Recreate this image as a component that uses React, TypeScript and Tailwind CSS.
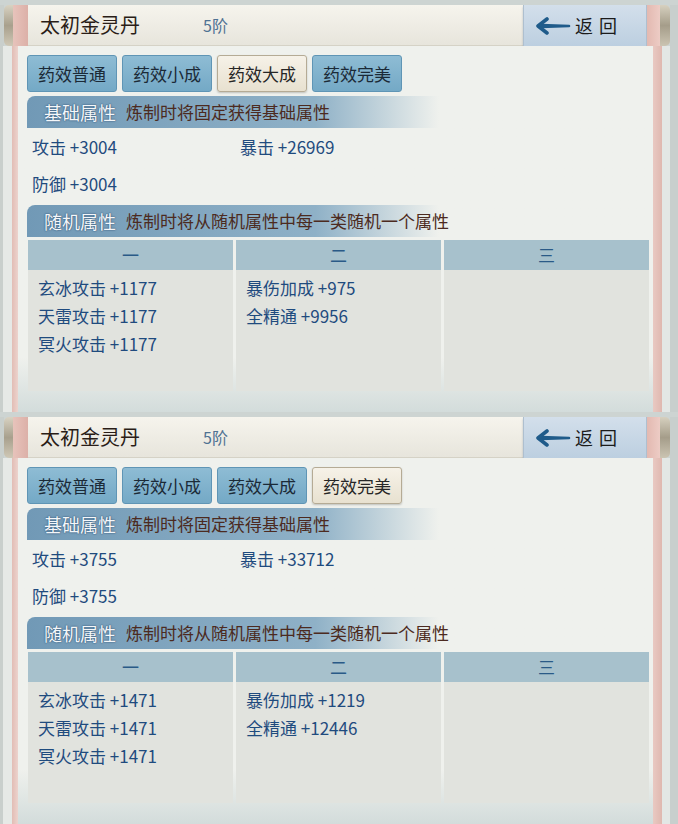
import React from 'react';

type PanelData = {
  active: number;
  atk: string;
  crit: string;
  def: string;
  col1: string[];
  col2: string[];
};

const tabs = ['药效普通', '药效小成', '药效大成', '药效完美'];

const panels: PanelData[] = [
  {
    active: 2,
    atk: '+3004',
    crit: '+26969',
    def: '+3004',
    col1: ['玄冰攻击 +1177', '天雷攻击 +1177', '冥火攻击 +1177'],
    col2: ['暴伤加成 +975', '全精通 +9956'],
  },
  {
    active: 3,
    atk: '+3755',
    crit: '+33712',
    def: '+3755',
    col1: ['玄冰攻击 +1471', '天雷攻击 +1471', '冥火攻击 +1471'],
    col2: ['暴伤加成 +1219', '全精通 +12446'],
  },
];

function SectionHeader({ label, desc }: { label: string; desc: string }) {
  return (
    <div className="h-[32px] w-[412px] flex items-center whitespace-nowrap rounded-tl-[8px] bg-gradient-to-r from-[#7199b6] via-[#8fb1c7] via-70% to-transparent">
      <span className="shrink-0 pl-[17px] text-[18px] text-[#f4f7fa] [text-shadow:0_0_2px_#35587a,0_0_1px_#35587a]">
        {label}
      </span>
      <span className="shrink-0 pl-[10px] text-[17px] text-[#4c2a20]">{desc}</span>
    </div>
  );
}

function Panel({ data }: { data: PanelData }) {
  return (
    <div className="h-[412px] flex flex-col bg-[#cdd4d2]">
      <div className="h-[5px]" />
      {/* Title bar */}
      <div className="h-[41px] flex">
        <div className="w-[4px] bg-[#c9cfcc]" />
        <div className="w-[9px] rounded-l-[5px] bg-gradient-to-b from-[#d8d2c2] via-[#a8a08d] to-[#cfc8b6]" />
        <div className="w-[15px] bg-gradient-to-r from-[#e7c3bb] to-[#dcb0a8]" />
        <div className="flex-1 flex items-center pl-[12px] bg-gradient-to-b from-[#f6f4ed] to-[#e7e5dc] border-b border-[#d5d2c6]">
          <span className="text-[20px] text-[#2a1d17] w-[163px]">太初金灵丹</span>
          <span className="text-[16px] text-[#4f7293]">5阶</span>
        </div>
        <div className="w-[124px] flex items-center pl-[11px] bg-gradient-to-b from-[#d3dfeb] to-[#bccfe0] border-x border-[#aebfcf] shadow-[0_2px_2px_rgba(90,110,130,0.35)]">
          <svg width="36" height="18" viewBox="0 0 36 18">
            <path d="M34 9 L6 8 L6 10 Z" stroke="#1f5b8a" strokeWidth="2.6" strokeLinejoin="round" fill="#1f5b8a" />
            <path d="M12 2 L3 9 L12 16" stroke="#1f5b8a" strokeWidth="3.6" fill="none" strokeLinecap="round" strokeLinejoin="round" />
          </svg>
          <span className="pl-[4px] text-[18px] tracking-[6px] text-[#1b1b1b]">返回</span>
        </div>
        <div className="w-[13px] bg-gradient-to-r from-[#e3b9b1] to-[#edccc5]" />
        <div className="w-[10px] rounded-r-[5px] bg-gradient-to-b from-[#d6d0bf] via-[#a59d8a] to-[#cbc4b2]" />
        <div className="w-[8px] bg-[#c8cfcd]" />
      </div>
      {/* Body */}
      <div className="flex-1 flex">
        <div className="w-[3px] bg-[#c9cfcc]" />
        <div className="w-[9px] bg-[#e6e9e6]" />
        <div className="w-[6px] bg-gradient-to-r from-[#e2bdb5] to-[#ecd3cd]" />
        <div className="flex-1 flex flex-col pl-[9px] pr-[4px] bg-gradient-to-b from-[#eff1ed] from-85% to-[#d3dcdb]">
          <div className="mt-[9px] flex gap-[5px]">
            {tabs.map((t, i) => (
              <div
                key={t}
                className={
                  i === data.active
                    ? 'w-[90px] h-[37px] flex items-center justify-center rounded-[3px] border border-[#b5ab95] bg-gradient-to-b from-[#f6f2e8] to-[#e8e1d0] text-[17px] text-[#262626] shadow-[0_1px_2px_rgba(0,0,0,0.2)]'
                    : 'w-[90px] h-[37px] flex items-center justify-center rounded-[3px] border border-[#5f95b5] bg-gradient-to-b from-[#8ebcd4] to-[#74a9c6] text-[17px] text-[#1b2a37]'
                }
              >
                {t}
              </div>
            ))}
          </div>
          <div className="mt-[4px]">
            <SectionHeader label="基础属性" desc="炼制时将固定获得基础属性" />
          </div>
          <div className="h-[37px] flex items-center text-[17px] text-[#1f4b7e] pl-[5px]">
            <span className="w-[208px]">攻击 {data.atk}</span>
            <span>暴击 {data.crit}</span>
          </div>
          <div className="h-[37px] flex items-center text-[17px] text-[#1f4b7e] pl-[5px]">
            <span>防御 {data.def}</span>
          </div>
          <div className="mt-[3px]">
            <SectionHeader label="随机属性" desc="炼制时将从随机属性中每一类随机一个属性" />
          </div>
          <div className="mt-[3px] ml-[1px] grid grid-cols-3 gap-x-[3px] h-[151px]">
            {['一', '二', '三'].map((h, ci) => {
              const items = ci === 0 ? data.col1 : ci === 1 ? data.col2 : [];
              return (
                <div key={h} className="flex flex-col">
                  <div className="h-[30px] flex items-center justify-center bg-[#a7c1cc] text-[17px] text-[#2a5a87]">
                    {h}
                  </div>
                  <div className="flex-1 bg-[#e1e3de] pt-[4px] pl-[10px]">
                    {items.map((it) => (
                      <div key={it} className="h-[28px] flex items-center text-[17px] text-[#1f4b7e]">
                        {it}
                      </div>
                    ))}
                  </div>
                </div>
              );
            })}
          </div>
        </div>
        <div className="w-[9px] bg-gradient-to-r from-[#e9c9c2] to-[#dfb8b0]" />
        <div className="w-[8px] bg-[#e3e7e5]" />
        <div className="w-[8px] bg-[#c8cfcd]" />
      </div>
    </div>
  );
}

export default function App() {
  return (
    <div className="w-[678px] h-[824px] overflow-hidden bg-[#cdd4d2] font-['Noto_Sans_CJK_SC','Noto_Sans',sans-serif]">
      {panels.map((p, i) => (
        <Panel key={i} data={p} />
      ))}
    </div>
  );
}
